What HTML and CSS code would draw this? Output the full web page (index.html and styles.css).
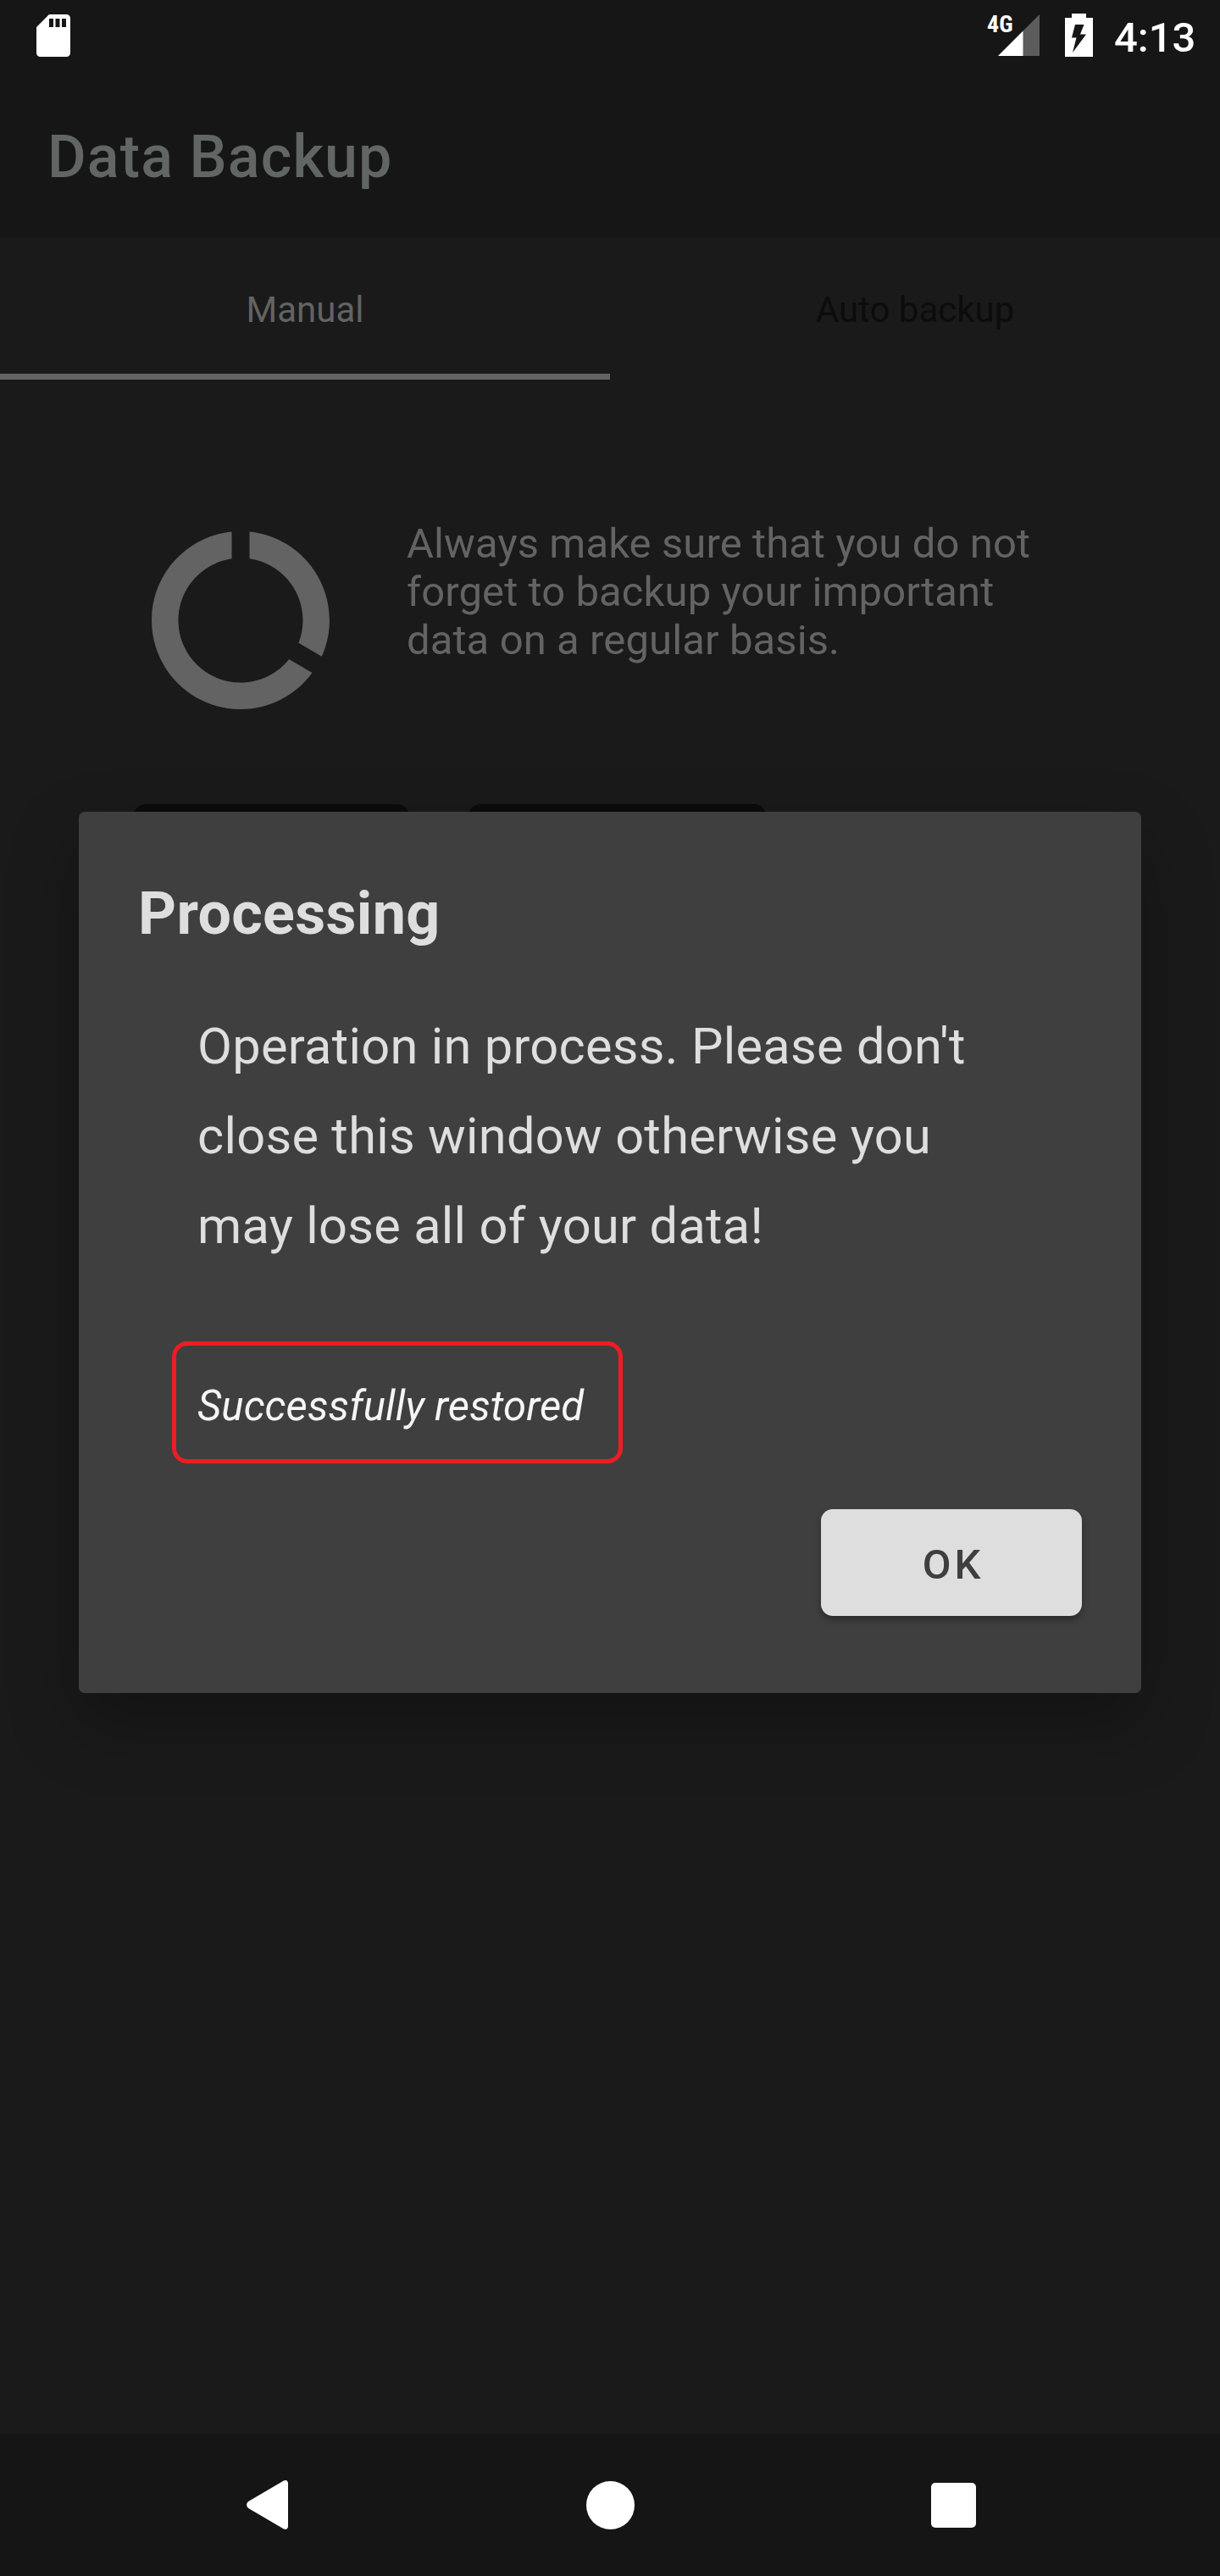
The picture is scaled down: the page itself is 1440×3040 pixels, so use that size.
FILE: index.html
```html
<!DOCTYPE html>
<html lang="en">
<head>
<meta charset="utf-8">
<title>Data Backup</title>
<link rel="stylesheet" href="styles.css">
</head>
<body>
<div class="screen">
  <header class="top">
    <div class="status-bar">
      <svg class="sd-icon" width="40" height="50" viewBox="0 0 40 50"><path fill="#fff" fill-rule="evenodd" d="M15 0H35.500A4.500 4.500 0 0 1 40 4.500V45.500A4.500 4.500 0 0 1 35.500 50H4.500A4.500 4.500 0 0 1 0 45.500V15ZM15 5V15H20V5ZM22.500 5V15H27.500V5ZM30 5V15H35V5Z"/></svg>
      <div class="status-right">
        <div class="signal">
          <span class="network">4G</span>
          <svg width="49" height="49" viewBox="0 0 49 49"><path fill="#5c5c5c" d="M49 0V49H29V20Z"/><path fill="#fff" d="M29.500 19.500V49H0Z"/></svg>
        </div>
        <svg class="battery" width="33" height="51" viewBox="0 0 33 51"><path fill="#fff" fill-rule="evenodd" d="M8 0H25V5H33V51H0V5H8ZM12 13L8 28.500H13.500L9 46L25 24.500H18L22.500 13Z"/></svg>
        <span class="clock">4:13</span>
      </div>
    </div>
    <h1 class="title">Data Backup</h1>
  </header>
  <nav class="tabs">
    <div class="tab active">Manual</div>
    <div class="tab">Auto backup</div>
  </nav>
  <main class="content">
    <section class="intro">
      <svg class="usage-icon" width="252" height="252" viewBox="0 0 24 24"><path fill="#636363" d="M13 2.050v3.030c3.390.49 6 3.390 6 6.920 0 .9-.18 1.750-.48 2.540l2.600 1.530c.56-1.240.88-2.620.88-4.070 0-5.180-3.950-9.450-9-9.950zM12 19c-3.870 0-7-3.130-7-7 0-3.530 2.610-6.430 6-6.920V2.050c-5.060.5-9 4.760-9 9.950 0 5.520 4.470 10 9.990 10 3.310 0 6.240-1.610 8.060-4.090l-2.600-1.530C16.170 17.980 14.210 19 12 19z"/></svg>
      <p class="intro-text">Always make sure that you do not<br>forget to backup your important<br>data on a regular basis.</p>
    </section>
    <div class="actions">
      <div class="action backup"></div>
      <div class="action restore"></div>
    </div>
  </main>
  <footer class="nav-bar">
    <svg width="50" height="58" viewBox="0 0 50 58"><path fill="#fff" d="M43.500.8C46.500-.8 49 .5 49 4V54C49 57.500 46.500 58.800 43.500 57.200L3 33.500C-.8 31-.8 27 3 24.500Z"/></svg>
    <svg width="57" height="57" viewBox="0 0 57 57"><circle fill="#fff" cx="28.500" cy="28.500" r="28.500"/></svg>
    <svg width="53" height="53" viewBox="0 0 53 53"><rect fill="#fff" width="53" height="53" rx="5"/></svg>
  </footer>
  <div class="dialog" role="dialog">
    <h2 class="dialog-title">Processing</h2>
    <p class="message">Operation in process. Please don't<br>close this window otherwise you<br>may lose all of your data!</p>
    <div class="result">Successfully restored</div>
    <button class="ok">OK</button>
  </div>
</div>
</body>
</html>
```
FILE: styles.css
```css
* { box-sizing: border-box; }
body {
  margin: 0;
  background: #1a1a1a;
  font-family: Roboto, "Liberation Sans", sans-serif;
}
svg { display: block; flex: none; }
.screen {
  position: relative;
  display: flex;
  flex-direction: column;
  width: 1440px;
  height: 3040px;
  overflow: hidden;
  background: #1a1a1a;
}
.top { height: 280px; background: #161616; }
.status-bar {
  display: flex;
  justify-content: space-between;
  height: 84px;
  padding: 16px 28px 0 43px;
}
.sd-icon { margin-top: 1px; }
.status-right { display: flex; align-items: flex-start; }
.signal { display: flex; margin: 1px 30px 0 0; }
.network {
  width: 31px;
  height: 24px;
  margin: -4px -18px 0 0;
  font: 700 28px/32px "Roboto Condensed", Roboto, sans-serif;
  color: #fff;
}
.clock {
  width: 97px;
  margin-left: 25px;
  font-size: 49px;
  font-weight: 500;
  line-height: 57px;
  color: #fff;
}
.title {
  margin: 60px 0 0 56px;
  font-size: 70px;
  font-weight: 500;
  line-height: 82px;
  letter-spacing: 1.13px;
  color: #616665;
}
.tabs { display: flex; height: 168px; }
.tab {
  flex: 1;
  padding-top: 61px;
  font-size: 42px;
  line-height: 50px;
  text-align: center;
  color: #0c0c0c;
}
.tab.active { color: #636363; border-bottom: 7px solid #636363; }
.content { flex: 1; padding-top: 158px; }
.intro { display: flex; height: 343px; padding-left: 158px; }
.intro-text {
  margin: 7px 0 0 70px;
  font-size: 49px;
  line-height: 57px;
  letter-spacing: .1px;
  color: #636363;
}
.actions { display: flex; gap: 70px; padding-left: 158px; }
.action { height: 126px; border-radius: 14px; background: #0b0b0b; }
.backup { width: 325px; }
.restore { width: 351px; }
.nav-bar {
  display: flex;
  align-items: center;
  justify-content: space-between;
  height: 168px;
  padding: 0 288px 0 291px;
  background: #151515;
}
.dialog {
  position: absolute;
  left: 93px;
  top: 958px;
  display: flex;
  flex-direction: column;
  align-items: flex-start;
  width: 1254px;
  height: 1040px;
  padding: 79px 70px 0;
  border-radius: 7px;
  background: #3f3f3f;
  box-shadow: 0 36px 84px rgba(0, 0, 0, .28);
}
.dialog-title {
  margin: 0;
  font-size: 70px;
  font-weight: 700;
  line-height: 82px;
  letter-spacing: .35px;
  color: #dedede;
}
.message {
  margin: 63px 0 0 70px;
  font-size: 59.5px;
  line-height: 106px;
  letter-spacing: .3px;
  color: #dedede;
}
.result {
  width: 532px;
  height: 144px;
  margin: 83px 0 0 40px;
  padding: 43px 0 0 25px;
  border: 5px solid #ee1c25;
  border-radius: 18px;
  font-size: 49px;
  font-style: italic;
  line-height: 57px;
  letter-spacing: .1px;
  color: #f5f5f5;
}
.ok {
  align-self: flex-end;
  width: 308px;
  height: 126px;
  margin-top: 54px;
  padding: 4px 0 0 4px;
  border: 0;
  border-radius: 14px;
  background: #dedede;
  box-shadow: 0 5px 9px rgba(0, 0, 0, .3);
  font: 500 49px/57px Roboto, sans-serif;
  letter-spacing: 4px;
  color: #3f3f3f;
}
```
